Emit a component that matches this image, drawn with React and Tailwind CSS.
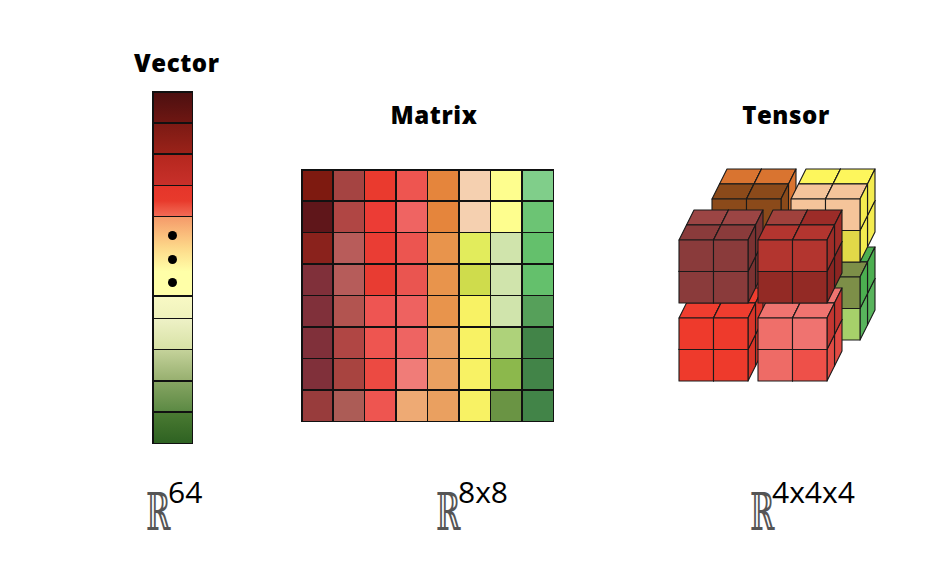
import React from "react"

const matrix = [
  ["#7e1a10", "#a54442", "#ea3a2e", "#ee5550", "#e5853c", "#f5d0b0", "#fefe8e", "#80ce8a"],
  ["#5f161a", "#b04644", "#ec3c35", "#ef6462", "#e5853c", "#f5d0b0", "#fefe8e", "#6cc474"],
  ["#8a221c", "#b85c5a", "#ea3d34", "#ec5550", "#e8944c", "#e2ec5c", "#d0e4ac", "#64c06c"],
  ["#80303a", "#b65c5a", "#e83c32", "#ea5550", "#e8944c", "#cfdc4c", "#d0e4ac", "#64c06c"],
  ["#80303a", "#b25450", "#ee5552", "#ee6260", "#e8944c", "#f8f264", "#d0e4ac", "#56a05a"],
  ["#80303a", "#b04644", "#ee5550", "#ee6462", "#eaa060", "#f8f264", "#aed27a", "#428448"],
  ["#80303a", "#a84440", "#ec4a42", "#f07c78", "#eaa060", "#f8f264", "#8cb84c", "#428448"],
  ["#983c3c", "#ac5c56", "#ee5550", "#eeaa74", "#eaa060", "#f8f264", "#6a9444", "#428448"],
]

// colours of each 2x2x2 block, keyed by block x, y, z
const blockColors = {
  "000": (i, j, k) => ({ f: "#8a3b3b", t: k ? "#9b4544" : "#8a3b3b", r: "#7a3232" }),
  "100": (i, j, k) => ({
    f: j ? "#932a25" : "#b3352f",
    t: k ? (i ? "#9c2c28" : "#a0413c") : "#b3352f",
    r: j ? "#8c2522" : "#a02d28",
  }),
  "010": () => ({ f: "#ee3a2c", t: "#ef3d2f", r: "#d93529" }),
  "110": (i, j) => ({
    f: j ? (i ? "#ee5049" : "#ee6b66") : i ? "#ef7370" : "#ef6f6a",
    t: "#ef7470",
    r: j ? "#e24b44" : "#c33631",
  }),
  "001": (i, j, k) => ({ f: "#8b4a1a", t: k ? "#d97430" : "#8b4a1a", r: k ? "#d97430" : "#8b4a1a" }),
  "101": (i, j, k) => ({ f: j ? "#e2d948" : "#f5c49a", t: k ? "#fdf65c" : "#f5c49a", r: "#f4ec50" }),
  "011": () => ({ f: "#e8504a", t: "#e8504a", r: "#c0392b" }),
  "111": (i, j, k) => ({ f: j ? "#a6d06a" : "#7d8f48", t: k ? "#4caf50" : "#7d8f48", r: j ? "#58b45c" : "#4caf50" }),
}

const CW = 34.5
const CH = 31.5
const DX = 7.5
const DY = 15

function Tensor() {
  const cubes = []
  for (let x = 0; x < 4; x++)
    for (let y = 0; y < 4; y++)
      for (let z = 0; z < 4; z++) cubes.push({ x, y, z })

  // painter's order: back first, bottom first, left first
  cubes.sort((a, b) => b.z - a.z || b.y - a.y || a.x - b.x)

  return (
    <svg width="210" height="230" viewBox="0 0 210 230">
      {cubes.map(({ x, y, z }) => {
        const bx = x >> 1, by = y >> 1, bz = z >> 1
        const li = x % 2, lj = y % 2, lk = z % 2
        const c = blockColors[`${bx}${by}${bz}`](li, lj, lk)
        const X = 9 + bx * 79 + li * CW + bz * 33 + lk * DX
        const Y = 80 + by * 78 + lj * CH - bz * 41 - lk * DY
        const front = `${X},${Y} ${X + CW},${Y} ${X + CW},${Y + CH} ${X},${Y + CH}`
        const top = `${X},${Y} ${X + CW},${Y} ${X + CW + DX},${Y - DY} ${X + DX},${Y - DY}`
        const right = `${X + CW},${Y} ${X + CW + DX},${Y - DY} ${X + CW + DX},${Y + CH - DY} ${X + CW},${Y + CH}`
        return (
          <g key={`${x}${y}${z}`} stroke="#1a1a1a" strokeWidth="1.1" strokeLinejoin="round">
            <polygon points={top} fill={c.t} />
            <polygon points={right} fill={c.r} />
            <polygon points={front} fill={c.f} />
          </g>
        )
      })}
    </svg>
  )
}

function Label({ sup }) {
  return (
    <div className="flex items-start">
      <div className="w-[22px]">
        <span className="inline-block origin-top-left scale-x-[0.82] scale-y-[1.45] font-['DejaVu_Serif',serif] text-[36px] font-light leading-none text-[#555]">
          ℝ
        </span>
      </div>
      <span className="-mt-[9px] font-['Open_Sans',sans-serif] text-[30px] leading-none text-black">{sup}</span>
    </div>
  )
}

export default function App() {
  return (
    <div className="flex h-[580px] w-[952px] flex-col overflow-hidden bg-white">
      <div className="flex h-[455px] items-start">
        {/* VECTOR */}
        <div className="ml-[134px] mt-[51px] flex w-[84px] flex-col">
          <h2 className="text-center font-['Open_Sans',sans-serif] text-[24px] font-extrabold leading-none tracking-[0.6px] text-black">
            Vector
          </h2>
          <div className="ml-[18px] mt-[16px] flex h-[353px] w-[41px] flex-col gap-[1.5px] bg-[#111] p-[1.5px]">
            <div className="flex-1 bg-linear-to-b from-[#4d1010] to-[#6e1612]" />
            <div className="flex-1 bg-linear-to-b from-[#7c1a14] to-[#9a2219]" />
            <div className="flex-1 bg-linear-to-b from-[#b5271e] to-[#c8302a]" />
            <div className="flex-1 bg-linear-to-b from-[#e5352a] via-[#e83a2c] to-[#f26a55]" />
            <div className="flex h-[78px] flex-col items-center gap-[14.5px] bg-linear-to-b from-[#f49a6a] via-[#fdd98a] via-40% to-[#ffffa8] to-70% pt-[14px]">
              <div className="h-[9px] w-[9px] rounded-full bg-black" />
              <div className="h-[9px] w-[9px] rounded-full bg-black" />
              <div className="h-[9px] w-[9px] rounded-full bg-black" />
            </div>
            <div className="h-[21px] bg-linear-to-b from-[#f8f9c4] to-[#eff2bc]" />
            <div className="flex-1 bg-linear-to-b from-[#eef1c6] to-[#d8e2a6]" />
            <div className="flex-1 bg-linear-to-b from-[#c4d29a] to-[#98b070]" />
            <div className="flex-1 bg-linear-to-b from-[#86a462] to-[#5c8a44]" />
            <div className="flex-1 bg-linear-to-b from-[#4a7a32] to-[#2e6222]" />
          </div>
        </div>

        {/* MATRIX */}
        <div className="ml-[83px] mt-[103px] flex w-[253px] flex-col">
          <h2 className="pl-[13px] text-center font-['Open_Sans',sans-serif] text-[24px] font-extrabold leading-none tracking-[0.6px] text-black">
            Matrix
          </h2>
          <div className="mt-[42px] grid h-[253px] w-[253px] grid-cols-8 grid-rows-8 gap-[1.5px] bg-[#111] p-[1.5px]">
            {matrix.flat().map((c, i) => (
              <div key={i} style={{ backgroundColor: c }} />
            ))}
          </div>
        </div>

        {/* TENSOR */}
        <div className="ml-[116px] mt-[103px] flex w-[210px] flex-col">
          <h2 className="pl-[22px] text-center font-['Open_Sans',sans-serif] text-[24px] font-extrabold leading-none tracking-[0.6px] text-black">
            Tensor
          </h2>
          <div className="mt-[33px]">
            <Tensor />
          </div>
        </div>
      </div>

      {/* LABELS */}
      <div className="mt-[31px] flex items-start">
        <div className="ml-[146px] w-[290px]">
          <Label sup="64" />
        </div>
        <div className="w-[314px]">
          <Label sup="8x8" />
        </div>
        <div>
          <Label sup="4x4x4" />
        </div>
      </div>
    </div>
  )
}
